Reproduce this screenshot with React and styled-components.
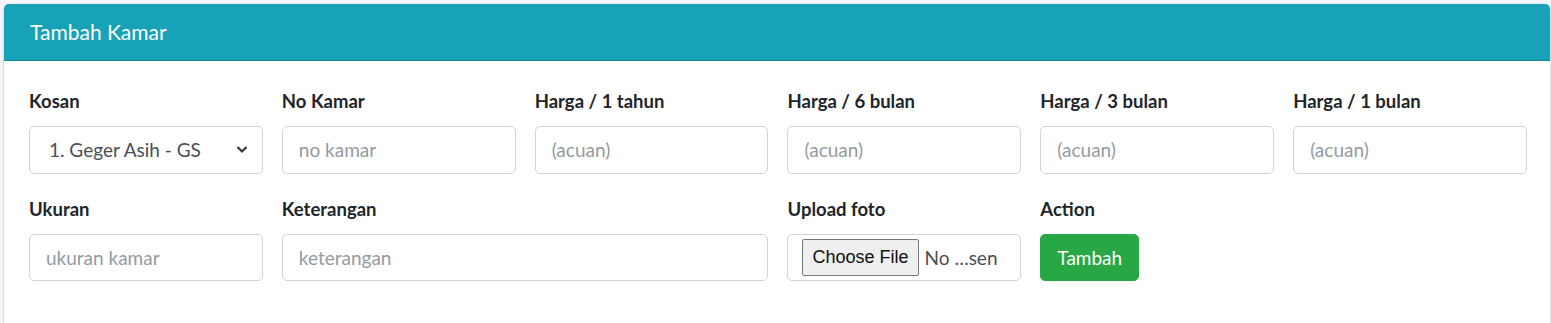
import React from 'react';
import styled, { createGlobalStyle } from 'styled-components';

const GlobalStyle = createGlobalStyle`
  body {
    margin: 0;
    background: #f4f6f9;
    font-family: Lato, "Source Sans Pro", "Liberation Sans", sans-serif;
    color: #212529;
  }
`;

const Page = styled.div`
  padding: 4px 1px 0 4px;
`;

const Card = styled.div`
  background: #fff;
  border-radius: 5px 5px 0 0;
  box-shadow: 0 0 1px rgba(0, 0, 0, 0.125), 0 1px 3px rgba(0, 0, 0, 0.2);
`;

const CardHeader = styled.div`
  background: #17a2b8;
  color: #fff;
  padding: 15px 26px;
  border-bottom: 1px solid #138a9c;
  border-radius: 5px 5px 0 0;
`;

const CardTitle = styled.h3`
  margin: 0;
  font-size: 21px;
  font-weight: 400;
  line-height: 26px;
`;

const CardBody = styled.div`
  display: grid;
  grid-template-columns: repeat(6, 1fr);
  column-gap: 19px;
  row-gap: 20px;
  padding: 25px 23px 42px 25px;
`;

const Group = styled.div`
  grid-column: span ${(p) => p.span || 1};
  display: flex;
  flex-direction: column;
`;

const Label = styled.label`
  font-size: 18.5px;
  font-weight: 700;
  line-height: 30px;
  margin-bottom: 10px;
`;

const Input = styled.input`
  box-sizing: border-box;
  height: 47.5px;
  width: 100%;
  padding: 0 16px;
  font-family: inherit;
  font-size: 19px;
  color: #495057;
  border: 1px solid #ced4da;
  border-radius: 5px;
  background: #fff;
  outline: none;

  &::placeholder {
    color: #939ba2;
  }
`;

const SelectBox = styled.div`
  box-sizing: border-box;
  height: 47.5px;
  display: flex;
  align-items: center;
  justify-content: space-between;
  padding: 0 14px 0 19px;
  font-size: 19px;
  color: #495057;
  border: 1px solid #ced4da;
  border-radius: 5px;
`;

const FileBox = styled.div`
  box-sizing: border-box;
  height: 47.5px;
  display: flex;
  align-items: center;
  gap: 6px;
  padding: 0 14px;
  border: 1px solid #ced4da;
  border-radius: 5px;
  font-size: 19px;
  color: #495057;
  white-space: nowrap;
  overflow: hidden;
`;

const FileButton = styled.span`
  box-sizing: border-box;
  height: 37px;
  display: inline-flex;
  align-items: center;
  padding: 0 9px;
  background: #efefef;
  border: 1px solid #767676;
  border-radius: 2px;
  color: #111;
  font-family: "Liberation Sans", Arial, sans-serif;
  font-size: 18px;
`;

const Button = styled.button`
  align-self: flex-start;
  height: 47px;
  padding: 0 16px;
  font-family: inherit;
  font-size: 19px;
  color: #fff;
  background: #28a745;
  border: 1px solid #28a745;
  border-radius: 5px;
`;

const Chevron = () => (
  <svg width="12" height="9" viewBox="0 0 12 9">
    <path d="M1.5 2 L6 6.5 L10.5 2" fill="none" stroke="#343a40" strokeWidth="2.2" />
  </svg>
);

const hargaFields = ['Harga / 1 tahun', 'Harga / 6 bulan', 'Harga / 3 bulan', 'Harga / 1 bulan'];

const App = () => (
  <Page>
    <GlobalStyle />
    <Card>
      <CardHeader>
        <CardTitle>Tambah Kamar</CardTitle>
      </CardHeader>
      <CardBody>
        <Group>
          <Label>Kosan</Label>
          <SelectBox>
            <span>1. Geger Asih - GS</span>
            <Chevron />
          </SelectBox>
        </Group>
        <Group>
          <Label>No Kamar</Label>
          <Input placeholder="no kamar" />
        </Group>
        {hargaFields.map((h) => (
          <Group key={h}>
            <Label>{h}</Label>
            <Input placeholder="(acuan)" />
          </Group>
        ))}

        <Group>
          <Label>Ukuran</Label>
          <Input placeholder="ukuran kamar" />
        </Group>
        <Group span={2}>
          <Label>Keterangan</Label>
          <Input placeholder="keterangan" />
        </Group>
        <Group>
          <Label>Upload foto</Label>
          <FileBox>
            <FileButton>Choose File</FileButton>
            <span>No …sen</span>
          </FileBox>
        </Group>
        <Group>
          <Label>Action</Label>
          <Button>Tambah</Button>
        </Group>
      </CardBody>
    </Card>
  </Page>
);

export default App;
